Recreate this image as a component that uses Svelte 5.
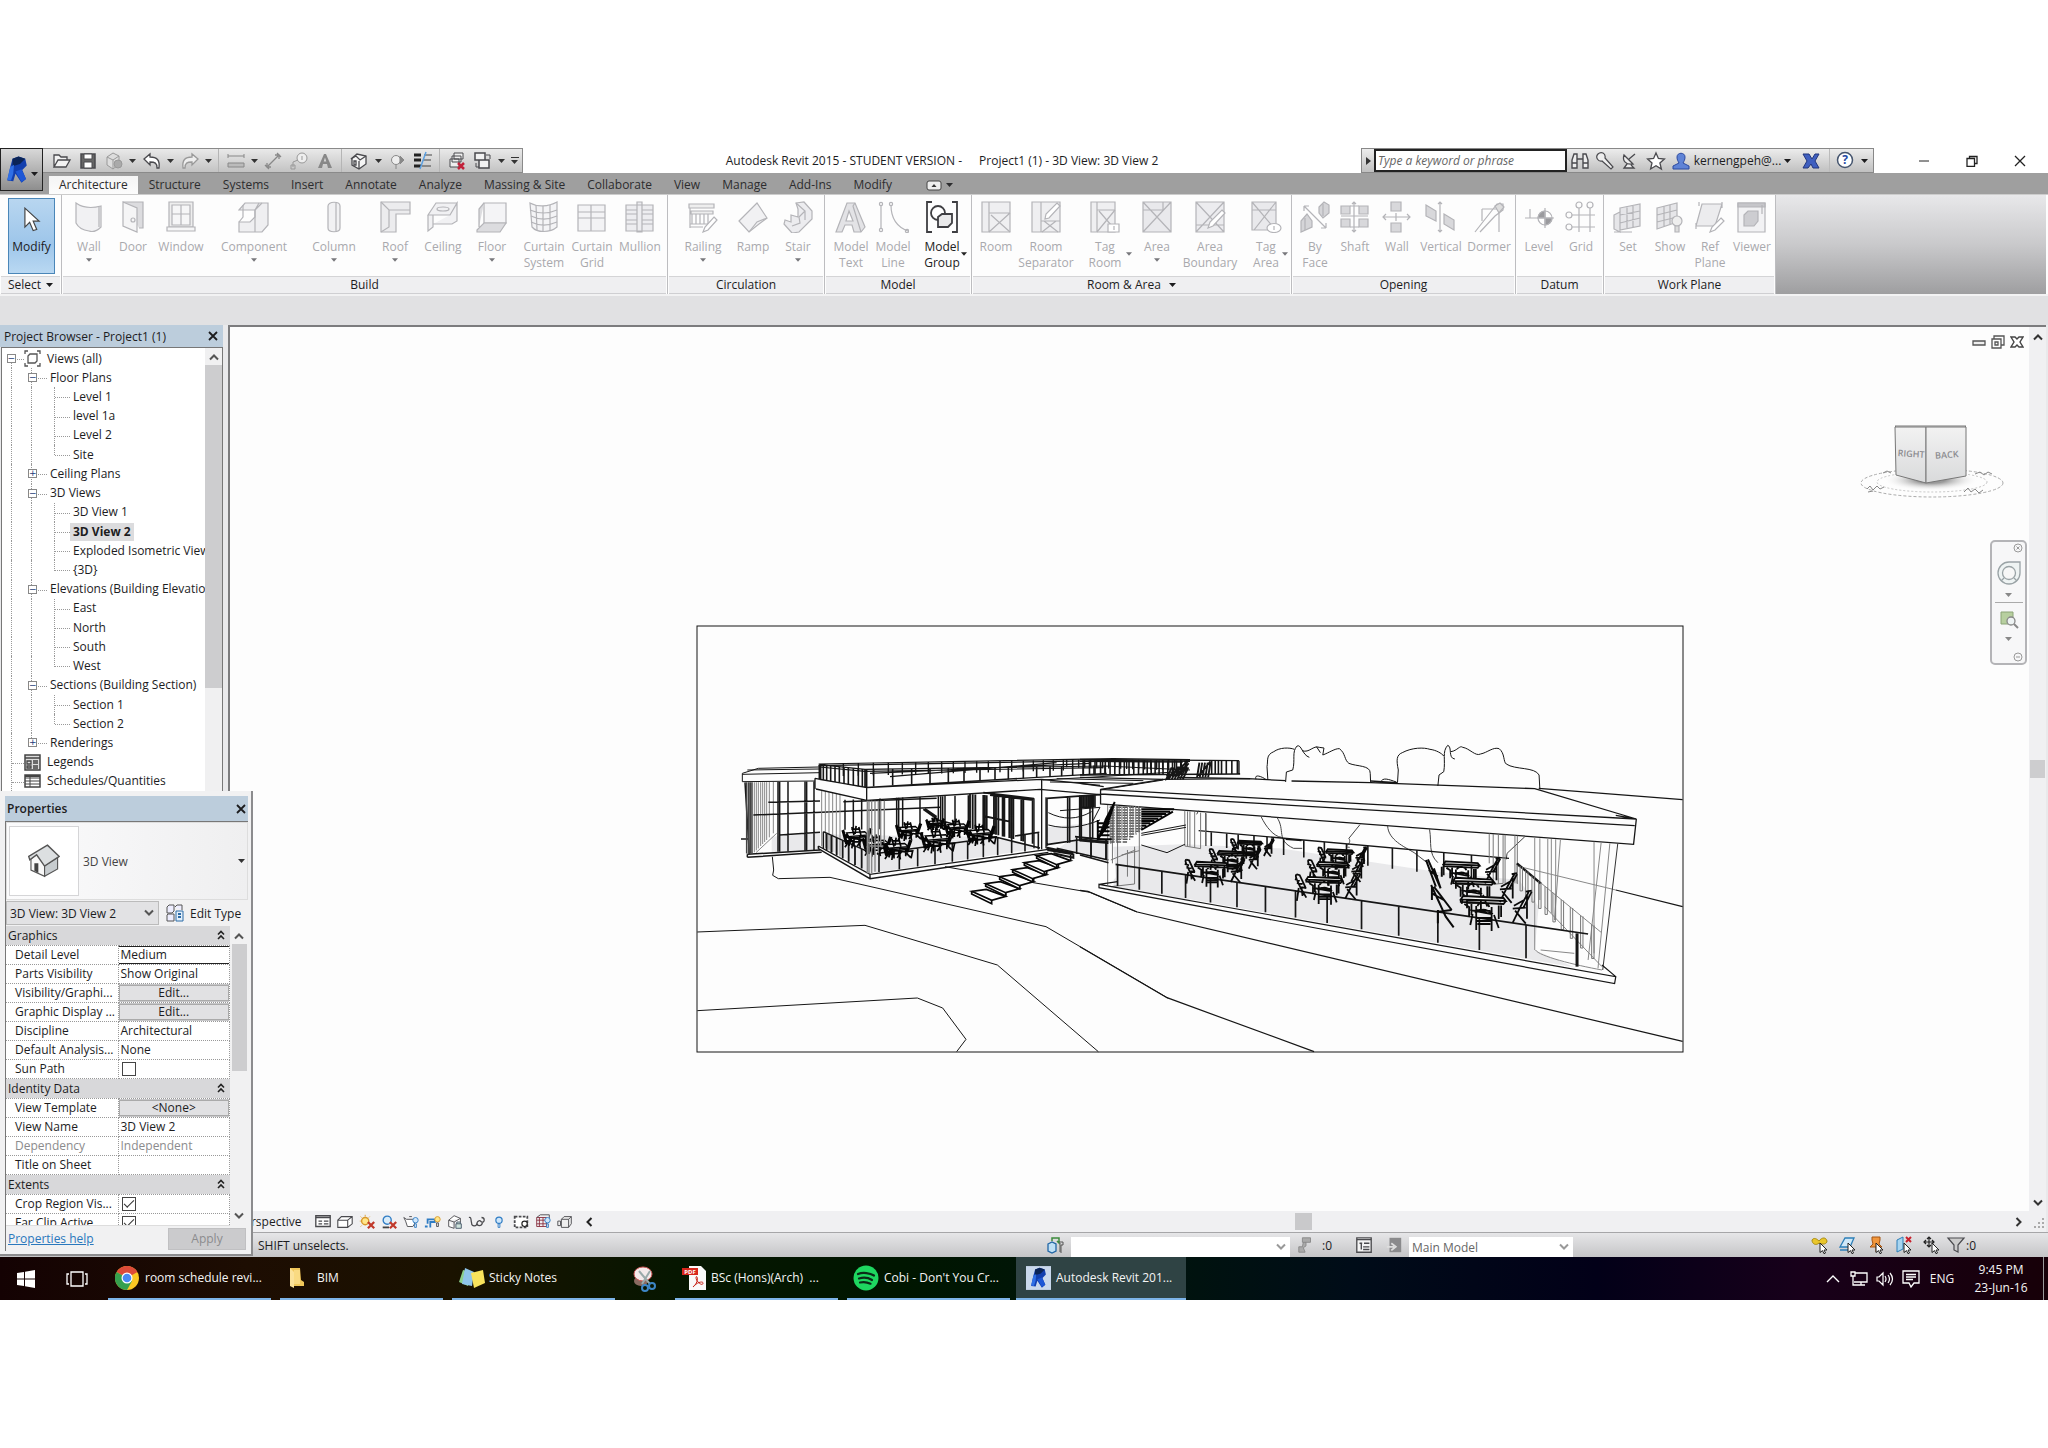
<script>
  const G = '#b4b4b8';
  const D = '#4a4a4e';

  const ribbonIcons = {
    wall: '<path d="M3 2c7 5 14 6 25 3v21c-4 4-9 5-12 4C9 29 5 26 3 22z" fill="#f1f1f3"/><path d="M26 6v20"/>',
    door: '<path d="M6 1h20v26h-4" fill="#dcdcdf"/><path d="M6 1l14 6v24L6 25z" fill="#f5f5f6"/><circle cx="16" cy="19" r="2"/>',
    window: '<path d="M4 1h24v25H4z" fill="#eee"/><path d="M7 4h18v20H7zM16 4v20M7 13h18M2 26h28v4H2z" fill="#f6f6f7"/>',
    component: '<path d="M1 9l6-7h23v22l-6 7H1V21h11l5-5V9z" fill="#efeff1"/><path d="M17 9l4-7M17 16V9l7-7M1 21l4-5V4M17 31V16"/>',
    column: '<path d="M10 5c0-5 12-5 12 0v22c0 5-12 5-12 0z" fill="#f1f1f3"/><path d="M18 2v28"/>',
    roof: '<path d="M2 1h29v12H17v18H2z" fill="#ececee"/><path d="M2 1l8 8h21M10 9v17L2 31"/>',
    ceiling: '<path d="M1 14L9 2h21l-7 12zM1 14v16l5-4V14M23 14L30 2v18l-5 3H6" fill="#f1f1f3"/><ellipse cx="16" cy="8" rx="6" ry="2"/>',
    floor: '<path d="M8 2h22v20L8 22z" fill="#f4f4f6"/><path d="M1 29l7-7h22l-6 9H1zM8 2L3 8v18" fill="#dcdcdf"/>',
    csys: '<path d="M2 2c7 4 18 4 27-1v25c-7 6-20 6-25 0z" fill="#f4f4f6"/><path d="M8 4l1 25M15 5v26M22 4v26M2 9c9 4 18 4 27 0M3 15c8 4 17 4 26 0M3 21c8 4 17 4 26 0"/>',
    cgrid: '<path d="M2 4h27v26H2zM15 4v26M2 17h27M2 11h27" fill="#f3f3f5"/>',
    mullion: '<path d="M2 4h27v26H2zM13 1h5v30h-5zM2 9h11M2 13h11M2 19h11M2 23h11M18 9h11M18 13h11M18 19h11M18 23h11" fill="#ededf0"/>',
    railing: '<path d="M2 3h25v4H2zM4 10h22v3H4zM5 13v10M9 13v10M13 13v10M17 13v10M21 13v10M3 23h19M3 26h13M3 7v20" fill="#eee"/><path d="M27 16l3 3-9 10-5 2 2-5z" fill="#fff"/>',
    ramp: '<path d="M2 20L20 2l10 15-8 6-10 8z" fill="#f1f1f3"/><path d="M12 31l8-10 10-4"/>',
    stair: '<path d="M14 2l8-1 8 9v8L17 31l-7 1-8-9 1-4 6 2V14l7 2V8z" fill="#ececef"/><path d="M14 2l9 8-6 6 1 6-8 3M23 10v9"/>',
    mtext: '<path d="M12 2h8l10 24-4 5h-7l-2-7h-7l-3 7H1z" fill="#e3e3e6"/><path d="M14 10l4 10h-7z" fill="#fff"/><path d="M20 2l-2 3 8 26"/>',
    mline: '<path d="M4 4v24M14 4c0 14 6 22 17 26"/><circle cx="4" cy="3" r="1.6"/><circle cx="4" cy="29" r="1.6"/><circle cx="14" cy="3" r="1.6"/><circle cx="30" cy="30" r="1.6"/>',
    mgroup: '<g stroke="#3e3e42" stroke-width="1.8"><path d="M6 1H1v30h5M26 1h5v30h-5"/><circle cx="12" cy="12" r="7" fill="#fff"/><path d="M12 16l4-3h10v9l-4 4H12z" fill="#e9e9ea"/></g>',
    room: '<path d="M2 1h28v30H2z" fill="#efeff1"/><path d="M9 1v30M9 12h21M9 31l21-19M11 14l19 17"/>',
    roomsep: '<path d="M2 1h28v30H2z" fill="#efeff1"/><path d="M11 1v30M11 20h19M12 31l14-11M14 20l14 11"/><path d="M27 2l3 3-11 12-4 1 1-5z" fill="#fff"/>',
    tagroom: '<path d="M2 1h24v30H2z" fill="#efeff1"/><path d="M8 1v30M8 9h18M8 31L26 9M10 10l12 14"/><path d="M19 23h11v8H19zM25 25v4" fill="#fff"/>',
    area: '<path d="M2 1h28v30H2zM2 1l28 30M30 1L2 31M2 9h20M22 1v9" fill="#e9e9ec"/>',
    bound: '<path d="M2 1h28v30H2zM2 1l28 30M30 1L2 31M2 24h28" fill="#ececef"/><path d="M28 9l3 3-12 13-5 2 2-6z" fill="#fff"/>',
    tagarea: '<path d="M2 1h24v28H2zM2 1l22 26M26 1L4 29M2 9h24" fill="#e9e9ec"/><ellipse cx="24" cy="27" rx="7" ry="4.500" fill="#fff"/><path d="M24 25v4"/>',
    byface: '<path d="M2 31V20l6-7 5 7v6zM20 12V6l5-5 5 3v8l-6 5z" fill="#d5d5d8"/><path d="M5 5l22 22M5 5v5M5 5h5M27 27v-5M27 27h-5M6 17v12M24 3v12"/>',
    shaft: '<path d="M2 5h9v8H2zM20 5h9v8h-9zM2 18h9v8H2zM20 18h9v8h-9z" fill="#d8d8db"/><path d="M15 1v30M2 15h27M11 5h9M11 26h9M13 3l2-2 2 2M13 29l2 2 2-2"/>',
    owall: '<path d="M10 1h10v9H10zM10 22h10v9H10z" fill="#d8d8db"/><path d="M2 16h27M15 12v8M5 13l-3 3 3 3M26 13l3 3-3 3"/>',
    vertical: '<path d="M1 4l10 6v10L1 15zM19 13l10 6v10l-10-6z" fill="#d8d8db"/><path d="M15 1v30M13 3l2-2 2 2M13 29l2 2 2-2"/>',
    dormer: '<path d="M2 31L24 3h6v6l-8 6L7 31M9 8h17v23M9 8v12" /><path d="M22 5l5-3 4 4-5 6z" fill="#ddd"/>',
    level: '<circle cx="22" cy="17" r="7" fill="#fff"/><path d="M22 10v7h-7a7 7 0 0 1 7-7zM22 24v-7h7a7 7 0 0 1-7 7z" fill="#9a9a9e"/><path d="M2 17h29M22 7v20M7 8v9M4 17h6"/>',
    grid: '<circle cx="14" cy="4" r="3"/><circle cx="25" cy="4" r="3"/><circle cx="4" cy="14" r="3"/><circle cx="4" cy="26" r="3"/><path d="M14 7v24M25 7v24M7 14h23M7 26h23"/>',
    set: '<path d="M8 7l20-4v22L8 29zM2 14l6-3v20l-6-3zM15 5v22M21 4v22M8 14l20-4M8 22l20-5M2 31h18" fill="#e6e6e9"/>',
    show: '<path d="M3 7l20-5v19L3 28zM10 5v21M16 4v20M3 14l20-5M3 21l20-5" fill="#e6e6e9"/><circle cx="23" cy="20" r="5" fill="#eee"/><path d="M21 25h4v6h-4z" fill="#ddd"/>',
    ref: '<path d="M8 3h20l-7 22H2zM5 1v4M28 1v6M2 22v6" fill="#ececee"/><path d="M27 17l3 3-9 9-5 2 2-5z" fill="#fff"/>',
    viewer: '<path d="M2 2h27v29H2z" fill="#f2f2f4"/><path d="M2 2h27v4H2z" fill="#c6c6ca"/><path d="M8 14l4-4h10v10l-4 5H8z" fill="#cdcdd1"/><path d="M26 4v9"/>'
  };

  const panels = [
    { name: 'Build', w: 606, pad: 5, items: [
      ['wall', ['Wall'], 44, 1], ['door', ['Door'], 44], ['window', ['Window'], 52], ['component', ['Component'], 94, 1],
      ['column', ['Column'], 66, 1], ['roof', ['Roof'], 56, 1], ['ceiling', ['Ceiling'], 40], ['floor', ['Floor'], 58, 1],
      ['csys', ['Curtain', 'System'], 46], ['cgrid', ['Curtain', 'Grid'], 50], ['mullion', ['Mullion'], 46]] },
    { name: 'Circulation', w: 157, pad: 10, items: [['railing', ['Railing'], 50, 1], ['ramp', ['Ramp'], 50], ['stair', ['Stair'], 40, 1]] },
    { name: 'Model', w: 147, pad: 5, items: [['mtext', ['Model', 'Text'], 42], ['mline', ['Model', 'Line'], 42], ['mgroup', ['Model', 'Group'], 56, 2, true]] },
    { name: 'Room & Area', w: 320, pad: 3, more: true, items: [
      ['room', ['Room'], 42], ['roomsep', ['Room', 'Separator'], 58], ['tagroom', ['Tag', 'Room'], 60, 2],
      ['area', ['Area'], 44, 1], ['bound', ['Area', 'Boundary'], 62], ['tagarea', ['Tag', 'Area'], 50, 2]] },
    { name: 'Opening', w: 224, pad: 3, items: [['byface', ['By', 'Face'], 40], ['shaft', ['Shaft'], 40], ['owall', ['Wall'], 44], ['vertical', ['Vertical'], 44], ['dormer', ['Dormer'], 52]] },
    { name: 'Datum', w: 88, pad: 2, items: [['level', ['Level'], 42], ['grid', ['Grid'], 42]] },
    { name: 'Work Plane', w: 172, pad: 3, items: [['set', ['Set'], 42], ['show', ['Show'], 42], ['ref', ['Ref', 'Plane'], 38], ['viewer', ['Viewer'], 46]] }
  ];

  const tabs = ['Architecture', 'Structure', 'Systems', 'Insert', 'Annotate', 'Analyze', 'Massing & Site', 'Collaborate', 'View', 'Manage', 'Add-Ins', 'Modify'];

  const quick = [
    ['Open', `<path d="M2 16V4h5l2 2h6v3M2 16l4-7h12l-4 7z" fill="#f2f2f2" stroke="${D}" stroke-width="1.300"/>`],
    ['Save', `<path d="M3 3h14v14H3z" fill="#666" stroke="${D}" stroke-width="1.500"/><path d="M6 3h8v5H6zM6 11h8v6H6z" fill="#fff" stroke="${D}"/>`],
    ['Synchronize', '<path d="M3 6l6-4 6 3v8l-6 5-6-4z" fill="#ddd" stroke="#999"/><path d="M3 6l6 3 6-4M9 9v9" stroke="#999"/><circle cx="14" cy="13" r="4" fill="#aaa" stroke="#999"/>'],
    'arrow',
    ['Undo', `<path d="M2 8l6-5v3c7 0 10 3 9 11l-2 0c0-5-2-6-7-6v3z" fill="#fff" stroke="${D}" stroke-width="1.300"/>`], 'arrow',
    ['Redo', '<path d="M18 8l-6-5v3C5 6 2 9 3 17l2 0c0-5 2-6 7-6v3z" fill="#eee" stroke="#999" stroke-width="1.300"/>'], 'arrow', 'sep',
    ['Dimension', '<path d="M2 5h16M2 3v4M18 3v4M2 12h16v4H2z" fill="#bbb" stroke="#888"/>'], 'arrow',
    ['Aligned dimension', '<path d="M5 15L15 5M4 12v4h4M12 4h4v4M2 14l4 4M14 2l4 4" stroke="#888" stroke-width="1.300"/>'],
    ['Tag', '<circle cx="13" cy="7" r="5" fill="#eee" stroke="#999"/><path d="M13 5v4M9 9l-5 2v5M2 14h4v4H2z" stroke="#999"/>'],
    ['Text', '<path d="M3 17L9 3h2l6 14h-4l-1-4H8l-1 4zM8.700 10.500h2.600L10 6.500z" fill="#888" fill-rule="evenodd" stroke="none"/>'], 'sep',
    ['Default 3D view', `<path d="M2 8l6-5 9 2v8l-7 5-7-4V8" fill="#f5f5f5" stroke="${D}" stroke-width="1.300"/><path d="M2 8l5-3 4 4 6-4M10 10v8M5 10v4h2v-4z" stroke="${D}" stroke-width="1.300"/>`], 'arrow',
    ['Section', '<circle cx="9" cy="9" r="4.500" fill="#eee" stroke="#888"/><path d="M13 5l4 4-4 4z" fill="#888" stroke="#888"/><path d="M9 14v4" stroke="#888"/>'],
    ['Thin lines', '<path d="M1 4h7M1 9h7M1 15h7" stroke="#222" stroke-width="3"/><path d="M11 4h8M10 9h8M9 15h9" stroke="#444"/><path d="M13 1L7 18" stroke="#5b9fe0" stroke-width="1.500"/>'], 'sep',
    ['Close hidden windows', `<path d="M7 2h9v6H7zM5 5h9v6H5zM3 8h9v8H3z" fill="#eee" stroke="${D}"/><path d="M11 12l6 6M17 12l-6 6" stroke="#c2213a" stroke-width="2.500"/>`],
    ['Switch windows', `<path d="M2 2h10v7H2zM6 9h10v8H6z" fill="#f2f2f2" stroke="${D}" stroke-width="1.500"/><path d="M13 4h4v4M3 12v4h3" stroke="${D}"/>`], 'arrow'
  ];

  const info = [
    ['Search', `<path d="M2 17V9l2-6h3v14zM18 17V9l-2-6h-3v14zM7 8h6M2 12h5M13 12h5" fill="#eee" stroke="${D}" stroke-width="1.400"/>`, 26],
    ['Subscription center', `<path d="M3 3c3-3 8-1 7 4l8 9-2 2-9-8c-4 1-7-4-4-7z" fill="#eee" stroke="${D}" stroke-width="1.200"/>`, 24],
    ['Communication center', `<path d="M4 4c-2 6 2 10 9 9zM4 4l9 9M9 8l6-5M7 13l-3 4h10l-3-3" fill="#eee" stroke="${D}" stroke-width="1.300"/>`, 26],
    ['Favorites', `<path d="M10 2l2.400 5.500 6 .5-4.500 4 1.500 6-5.400-3.300L4.600 18 6 12 1.600 8l6-.5z" fill="#fff" stroke="${D}" stroke-width="1.300"/>`, 26],
    ['Account', '<path d="M6 6c0-5 8-5 8 0 0 3-1 4-2 6l6 3v3H2v-3l6-3C7 10 6 9 6 6z" fill="#5f83d6" stroke="#2c4aa0"/>', 24]
  ];

  const tree = [
    [0, 'Views (all)', '-'], [1, 'Floor Plans', '-'], [2, 'Level 1'], [2, 'level 1a'], [2, 'Level 2'], [2, 'Site', 'end'],
    [1, 'Ceiling Plans', '+'], [1, '3D Views', '-'], [2, '3D View 1'], [2, '3D View 2', 'sel'], [2, 'Exploded Isometric View'], [2, '{3D}', 'end'],
    [1, 'Elevations (Building Elevation)', '-'], [2, 'East'], [2, 'North'], [2, 'South'], [2, 'West', 'end'],
    [1, 'Sections (Building Section)', '-'], [2, 'Section 1'], [2, 'Section 2', 'end'], [1, 'Renderings', '+'],
    [0, 'Legends', 'legend'], [0, 'Schedules/Quantities', 'sched']
  ];

  const props = [
    ['cat', 'Graphics'], ['input', 'Detail Level', 'Medium'], ['text', 'Parts Visibility', 'Show Original'], ['btn', 'Visibility/Graphi...', 'Edit...'],
    ['btn', 'Graphic Display ...', 'Edit...'], ['text', 'Discipline', 'Architectural'], ['text', 'Default Analysis...', 'None'], ['check', 'Sun Path', false],
    ['cat', 'Identity Data'], ['btn', 'View Template', '<None>'], ['text', 'View Name', '3D View 2'], ['dim', 'Dependency', 'Independent'], ['text', 'Title on Sheet', ''],
    ['cat', 'Extents'], ['check', 'Crop Region Vis...', true], ['check', 'Far Clip Active', true]
  ];

  const bulb = '<circle cx="15" cy="8" r="3" fill="#cfe6fa" stroke="#2f7cc4"/><path d="M14 12h2v4h-2z" stroke="#2f7cc4"/>';
  const redX = '<path d="M11 10l7 7M18 10l-7 7" stroke="#c0392b" stroke-width="2.500"/>';
  const viewIcons = [
    `<path d="M2 3h16v12H2z" fill="#fff" stroke="${D}" stroke-width="1.500"/><path d="M2 5h16M5 9h4M11 9h5M5 12h4M11 12h5" stroke="${D}" stroke-width="1.500"/>`,
    `<path d="M2 8h11v8H2zM2 8l4-4h12v8l-5 4M13 8l5-4" fill="#fff" stroke="${D}" stroke-width="1.200"/>`,
    `<circle cx="8" cy="9" r="4" fill="#ffe68a" stroke="#d9982a" stroke-width="1.500"/><path d="M8 2v2M2 9h1M3 4l1 1M13 4l-1 1M4 14l-1 1" stroke="#d9982a"/>${redX}`,
    `<circle cx="8" cy="8" r="4.500" fill="#d9ecfa" stroke="#2f7cc4" stroke-width="1.500"/><path d="M3 16h7" stroke="#444" stroke-width="2"/>${redX}`,
    `<path d="M2 5l3 2h8l1 5-2 3H6L4 9zM8 4h3" fill="#fff" stroke="${D}"/>${bulb}`,
    `<path d="M1 15h3M4 12V7h8v3H7v6" stroke="#2f7cc4" stroke-width="2"/><circle cx="15" cy="7" r="3" fill="#ffe68a" stroke="#d9982a"/><path d="M14 11h2v4h-2z" stroke="${D}"/>`,
    `<path d="M3 8l6-5 7 3v4M3 8v7l6 2M3 8l6 2 7-4M9 10v7" fill="#fff" stroke="${D}"/><path d="M11 12h6v5h-6zM12 12v-2h4v2" fill="#cfe3dc" stroke="#456"/>`,
    `<path d="M1 5c3-1 2 3 3 6 0 5 6 4 6 0 1-3 3-3 5-1 4 1 4-5 0-5M10 11c0 4 5 4 6 0" stroke="${D}" stroke-width="1.400"/>`,
    '<circle cx="10" cy="8" r="3.500" fill="#cfe6fa" stroke="#2f7cc4" stroke-width="1.300"/><path d="M9 12h2v4H9z" stroke="#2f7cc4"/>',
    `<path d="M3 4h14v12H3z" fill="#fff" stroke="${D}" stroke-width="2" stroke-dasharray="3 1.500"/><circle cx="14" cy="12" r="3" fill="#fff" stroke="#222" stroke-width="1.300"/>`,
    `<path d="M3 5h11v10H3zM6 5v10M10 5v10M3 8h11M3 12h11" stroke="#8a3040"/><path d="M3 5l4-3h10v8" stroke="${D}"/>${bulb}`,
    `<path d="M6 7h8v9H6zM6 7l3-3h8v8l-3 4M2 9h3v5H2zM14 7l3-3" fill="#eee" stroke="${D}"/>`
  ];

  const cur = '<path d="M10 8l7 7-3 0 1.500 3-1.500.700L12.500 15.600 10 17.500z" fill="#fff" stroke="#222"/>';
  const selectIcons = [
    `<path d="M2 5c2-3 5-1 7 1 3-4 7-4 8 0 0 3-4 4-8 2-3 3-7 1-7-3z" fill="#e9c62c" stroke="#a88a10"/>${cur}`,
    `<path d="M2 12l5-9h9l-4 9zM2 15h8" fill="#cfe8f8" stroke="#2d7fb8" stroke-width="1.300"/>${cur}`,
    `<path d="M6 2h8v3l-1 4 3 3H4l3-3-1-4zM10 12v5" fill="#f1963c" stroke="#a45413"/>${cur}`,
    `<path d="M3 5l6-3v12l-6 3z" fill="#a8d5f0" stroke="#2d7fb8"/><path d="M12 2l5 5M17 2l-5 5" stroke="#c8202c" stroke-width="2"/>${cur}`,
    `<path d="M7 2v10M2 7h10M5 4l2-2 2 2M5 10l2 2 2-2M4 5L2 7l2 2M10 5l2 2-2 2" stroke="#222" stroke-width="1.200"/>${cur}`,
    `<path d="M2 3h16l-6 7v7l-4-2v-5z" fill="#ccc" stroke="${D}" stroke-width="1.200"/>`
  ];

  const lerp = (a, b, t) => a + (b - a) * t;
  const posts = (xs, top, bot) => xs.map((x) => {
    const t = (x - top[0]) / (top[2] - top[0]);
    return `M${x} ${lerp(top[1], top[3], t)}V${lerp(bot[0], bot[1], t)}`;
  }).join('');
  const range = (a, b, step) => Array.from({ length: Math.floor((b - a) / step) + 1 }, (_, i) => a + i * step);

  const steps = [[845, 514], [887, 491], [929, 470], [968, 449], [1003, 428], [1040, 407]];
  const leftTables = [[500, 345, 0.8], [560, 370, 0.8], [655, 328, 0.7], [740, 355, 0.9], [800, 320, 0.7], [870, 338, 0.8], [620, 380, 0.8], [735, 308, 0.5]];
  const rightSets = [
    [430, 368, 0.8, 0], [385, 400, 0.95, 0], [333, 434, 1.1, 0],
    [657, 395, 0.9, 1], [640, 434, 1.05, 1], [618, 480, 1.2, 1],
    [965, 434, 1.2, 2], [995, 484, 1.35, 2], [1020, 540, 1.5, 2]
  ];
  const frontPosts = [95, 150, 207, 267, 330, 397, 469, 545, 625, 712, 806, 905, 1010, 1128];
</script>

{#snippet icon(body, size = 20)}
  <svg class="ic" width={size} height={size} viewBox="0 0 20 20" fill="none" aria-hidden="true">{@html body}</svg>
{/snippet}

{#snippet tri()}<svg class="tri" width="7" height="4" viewBox="0 0 7 4" aria-hidden="true"><path d="M0 0h7L3.500 4z" fill="currentColor" /></svg>{/snippet}

{#snippet chev(dir)}
  <svg class="chev {dir}" width="12" height="8" viewBox="0 0 12 8" fill="none" aria-hidden="true"><path d="M2 6.500l4-4 4 4" stroke="currentColor" stroke-width="2" /></svg>
{/snippet}

{#snippet cross()}<svg width="10" height="10" viewBox="0 0 10 10" aria-hidden="true"><path d="M1 1l8 8M9 1L1 9" stroke="#1c1c1e" stroke-width="1.800" /></svg>{/snippet}

{#snippet revit()}
  <path d="M10 3l8-3 9 3 2 9-6 6 5 12-6 5-8-12-3 10-8-1L7 14z" fill="#123fae" />
  <path d="M10 3l8-3 9 3-7 7-10 3z" fill="#0b2456" />
  <path d="M7 14l5-3-1 12-3 9-5-1z" fill="#2f6fe6" />
  <path d="M14 20l8-3 6 13-6 4z" fill="#1d57d6" />
{/snippet}

{#snippet house()}
  <path d="M5 26L16 18 29 38V57L5 46z" fill="#f8f8f8" stroke="#555" stroke-width="2" />
  <path d="M29 38L52 24V44L29 57z" fill="#c7cccf" stroke="#555" stroke-width="2" />
  <path d="M34 2L55 22 29 39 15 19 3 28 1 22z" fill="#dcdfe1" stroke="#555" stroke-width="2.500" />
  <path d="M11 34h7v17l-7-4z" fill="#444" />
{/snippet}

<div class="page">
  <header class="top">
    <button class="app" aria-label="Application menu">
      <svg width="24" height="32" viewBox="0 0 32 36" aria-hidden="true">{@render revit()}</svg>{@render tri()}
    </button>
    <div class="titlebar">
      <div class="quick">
        {#each quick as q}
          {#if q === 'arrow'}<button class="qa" aria-label="More">{@render tri()}</button>
          {:else if q === 'sep'}<span class="qs"></span>
          {:else}<button class="qi" aria-label={q[0]}>{@render icon(q[1])}</button>{/if}
        {/each}
        <button class="qc" aria-label="Customize toolbar"><span class="bar"></span>{@render tri()}</button>
      </div>
      <h1><span>Autodesk Revit 2015 - STUDENT VERSION -</span><span>Project1 (1) - 3D View: 3D View 2</span></h1>
      <div class="info">
        <button class="play" aria-label="Collapse search"><svg width="5" height="8" viewBox="0 0 5 8"><path d="M0 0l5 4-5 4z" fill="#333" /></svg></button>
        <input type="text" placeholder="Type a keyword or phrase" aria-label="Search help" />
        {#each info as [label, body, w]}
          <button aria-label={label} style:width="{w}px">{@render icon(body)}</button>
        {/each}
        <button class="user">kernengpeh@...{@render tri()}</button>
        <button class="xch" aria-label="Exchange apps">{@render icon('<path d="M2 3h6l3 5 3-5h4l-4 7 4 7h-6l-2-4-3 4H2l4-7z" fill="#3f5fc0" stroke="#22367c"/>')}</button>
        <button class="help" aria-label="Help"><svg width="19" height="19" viewBox="0 0 19 19"><circle cx="9" cy="9" r="7.500" fill="#fff" stroke="#44546e" stroke-width="1.500" /><text x="9" y="13" text-anchor="middle" font-size="12" font-weight="700" fill="#2549a5">?</text></svg>{@render tri()}</button>
      </div>
      <div class="win">
        <button aria-label="Minimize"><svg width="12" height="12" viewBox="0 0 12 12"><path d="M1 6h10" stroke="#222" /></svg></button>
        <button aria-label="Restore"><svg width="12" height="12" viewBox="0 0 12 12" fill="none" stroke="#222"><path d="M1 3.500h7.500v8H1zM3.500 3.500v-2H11v7H8.500" stroke-width="1.300" /></svg></button>
        <button aria-label="Close"><svg width="12" height="12" viewBox="0 0 12 12"><path d="M1 1l10 10M11 1L1 11" stroke="#222" stroke-width="1.300" /></svg></button>
      </div>
    </div>
    <nav class="tabs">
      {#each tabs as t, i}<button class:active={i === 0}>{t}</button>{/each}
      <button class="mini" aria-label="Minimize ribbon"><svg width="16" height="11" viewBox="0 0 16 11"><rect x="1" y="1" width="14" height="9" rx="2" fill="#eee" stroke="#444" /><path d="M5.500 7L8 4l2.500 3z" fill="#333" /></svg>{@render tri()}</button>
    </nav>
  </header>

  <section class="ribbon">
    <div class="panel select">
      <div class="tools"><button class="modify"><svg width="18" height="26" viewBox="0 0 14 22"><path d="M1 1v16l4-4 3 7 3-1-3-7h5z" fill="#fff" stroke="#444" /></svg>Modify</button></div>
      <div class="ptitle">Select {@render tri()}</div>
    </div>
    {#each panels as p}
      <div class="panel" style:width="{p.w}px">
        <div class="tools" style:padding-left="{p.pad}px">
          {#each p.items as [ic, lines, w, arrow, on]}
            <button class="tool" class:on class:side={arrow === 2} style:width="{w}px">
              <svg width="32" height="32" viewBox="0 0 32 32" fill="none" stroke={G} stroke-width="1.200" aria-hidden="true">{@html ribbonIcons[ic]}</svg>
              {#each lines as l}<span>{l}</span>{/each}
              {#if arrow}{@render tri()}{/if}
            </button>
          {/each}
        </div>
        <div class="ptitle">{p.name}{#if p.more}&nbsp;{@render tri()}{/if}</div>
      </div>
    {/each}
    <div class="rest"></div>
  </section>
  <div class="options"></div>

  <main class="work">
    <aside class="browser">
      <div class="phead"><span>Project Browser - Project1 (1)</span><button aria-label="Close browser">{@render cross()}</button></div>
      <div class="treewrap">
        <ul class="tree">
          {#each tree as [d, label, kind], i}
            <li>
              {#if d === 0}
                <span class="g v h" class:first={i === 0}>{#if kind === '-'}<i class="box">−</i>{/if}</span>
                <span class="ticon">
                  {#if kind === '-'}<svg width="17" height="17" viewBox="0 0 17 17" fill="none" stroke="#555"><path d="M4 1H1v3M13 1h3v3M4 16H1v-3M13 16h3v-3M4 6l2-2h7v7l-2 2H4z" stroke-width="1.300" /></svg>
                  {:else if kind === 'legend'}<svg width="17" height="17" viewBox="0 0 17 17" fill="none" stroke="#444"><path d="M1 1h15v15H1z" fill="#ddd" stroke-width="1.500" /><path d="M1 4h15M3 7h4v3H3zM3 12h4v2H3zM9 7h5M9 9h5M9 12h5M9 14h5" stroke-width="1.300" /></svg>
                  {:else}<svg width="17" height="14" viewBox="0 0 17 14" fill="none" stroke="#444"><path d="M1 1h15v12H1z" fill="#fff" stroke-width="1.500" /><path d="M1 4h15M1 7h15M1 10h15M6 1v12" /><path d="M1 2h15" stroke-width="2" /></svg>{/if}
                </span>
              {:else}
                <span class="g v"></span>
                <span class="g wide h" class:v={i < 21} class:last={i === 20} class:bare={d === 2}>{#if d === 1}<i class="box">{kind === '+' ? '+' : '−'}</i>{/if}</span>
                {#if d === 2}<span class="g wide v h" class:last={kind === 'end'}></span>{/if}
              {/if}
              <span class="lbl" class:root={d === 0} class:sel={kind === 'sel'}>{label}</span>
            </li>
          {/each}
        </ul>
        <div class="vs"><div class="arr">{@render chev('up')}</div><div class="thumb"></div></div>
      </div>
    </aside>

    <section class="view">
      <div class="canvasrow">
        <div class="canvas">
          <svg class="scene" width="988" height="428" viewBox="696 625 988 428" role="img" aria-label="3D perspective of pavilion" fill="none" stroke="#161616" stroke-width="1">
            <rect x="697" y="626" width="986" height="426" />
            <g class="ns" transform="translate(690 720) scale(0.33333)">
              <path d="M22 636L525 616 922 735 1225 995M22 872L682 834 758 864 828 958 800 995M247 410L251 450 248 466 265 476 420 472 1068 620 1435 835M765 440L925 468M1030 488L1200 517 1340 576" />
              <g stroke="none" fill="#e9e9eb">
                <path d="M245 350L390 338 390 390 245 398zM405 340L460 345 900 350 1050 385 540 460 405 380zM1072 322L1205 308V358L1072 374zM1150 352L1255 360V420L1100 390zM1270 380L1500 372V545L1280 500z" />
              </g>
              <path d="M157 160L205 145 388 141M157 160V185L375 183M157 163L390 158M172 150L390 147" />
              <path d="M153 357H175M165 187L178 403M172 403L390 390M172 412L395 397M172 403V412" stroke-width="1.500" />
              <path d={posts([170, 176, 181, 186], [165, 187, 200, 187], [400, 402])} stroke="#444" stroke-width="1.500" />
              <path d={posts([193, 199, 205, 212, 218, 224, 230, 238, 250], [190, 187, 250, 186], [400, 340]) + 'M198 398L260 340'} stroke="#888" />
              <path d={posts([264, 269, 294, 345, 350, 372], [190, 187, 390, 184], [398, 391]) + 'M190 285L750 262M235 247L390 243M460 245L740 235M270 345L390 337'} stroke-width="1.500" />
              <path d={posts(range(395, 460, 11), [388, 210, 540, 240], [375, 460])} stroke="#888" />
              <path d="M375 175L530 203 1055 178 1230 190V224L1050 208 530 241 378 207z" fill="#fdfdfd" stroke="none" />
              <path d="M375 175L530 203 1055 178 1230 196M378 207L530 241 1050 208 1230 224M375 175V207M530 203V241M388 178L530 202 1250 160M1055 178V388M1032 235V385M1068 232V385" stroke-width="1.300" />
              <path d="M1058 180L1230 170 1470 155M1080 186L1330 190M1100 176L1360 182M1230 210L1420 180" />
              <path d="M386 132L1270 116 1500 119M386 137L1270 121 1500 124M388 134L525 148 1245 138 1500 150M388 141L525 154 1240 143M540 160L1200 130M600 170L1100 128" stroke-width="1.200" />
              <path d={posts([388, 392, 400, 410, 422, 435, 448, 462, 475, 490, 505, 517, 525], [388, 134, 525, 148], [178, 202]) + posts([530, 551, 608, 665, 720, 775, 822, 870, 915, 955, 1000, 1040, 1080, 1115, 1148, 1180, 1212, 1245], [530, 148, 1245, 136], [201, 162])} stroke-width="1.600" />
              <path d={posts([460, 505, 550, 595, 637, 677, 715, 755, 790, 825, 860, 895, 930, 965, 1000, 1030, 1060, 1090, 1120], [388, 131, 1270, 118], [170, 148]) + posts(range(1130, 1490, 18), [1130, 119, 1490, 120], [142, 152])} stroke-width="1.400" />
              <path d="M385 378L540 463 1075 388M385 386L540 476 1075 397M385 378V386M540 463V476M400 335L540 398M400 335V385" stroke-width="1.400" />
              <path d={posts([410, 424, 440, 458, 476, 495, 515], [400, 336, 540, 398], [386, 458])} stroke-width="1.800" />
              <path d={posts([567, 628, 683, 735, 787, 833, 880, 923, 965, 1005, 1045], [540, 402, 1050, 338], [460, 388]) + 'M565 400L920 352M920 352L1050 384M975 348L1048 337'} stroke-width="1.600" />
              <path d={posts([465, 490, 515, 570, 620, 626, 638, 690, 745, 752, 758, 765, 795, 835], [440, 240, 1050, 218], [330, 318])} stroke-width="1.500" />
              <path d={posts([840, 848, 856, 880, 884, 890, 912, 918, 925, 938, 943, 958, 964, 970, 994, 1000, 1028], [840, 222, 1030, 236], [325, 372]) + 'M880 218L1032 236M880 288L960 305M900 225L1030 240'} stroke-width="1.900" />
              <path d={posts([1071, 1133, 1139, 1169, 1174, 1200, 1208], [1070, 235, 1210, 226], [378, 358]) + 'M1070 235L1230 224M1070 374L1205 354M1170 262H1205'} stroke-width="1.600" />
              <path d={posts(range(1170, 1215, 5), [1170, 226, 1215, 226], [262, 262])} stroke-width="1.600" />
              <path d="M1075 278C1120 300 1160 300 1205 275M1075 315C1130 330 1180 320 1230 300M1110 272L1230 262M1205 310L1230 262" />
              <path d="M700 268L745 300 790 312M705 266L740 290" stroke-width="1.800" />
              {#each leftTables as [x, y, s]}
                <g transform="translate({x} {y}) scale({s})">
                  <path d="M-38 -8L30 -12 44 0-30 6z" fill="#eee" stroke="#050505" stroke-width="1.400" />
                  <path d="M-38 -4L-30 12 44 5M-28 6V40M34 4V36M-10 6V44M12 4V40M-50 -20L-36 30M-54 -18L-40 34M-48 -4L-20 18-30 40M-46 20L-10 24M50 -26L34 22 52 40M56 -24L40 22M30 18L60 16 54 44M-18 -30L-10 0M-2 -34L-6 -4M8 -30L16 0M-20 -22H12M-14 18L-18 50M8 18L14 48M-16 26H12M-24 16L-44 46M20 16L2 42M-40 8L44 22" stroke="#050505" stroke-width="1.700" />
                </g>
              {/each}
              <path d="M532 242V460M537 242V460M545 242V460M555 242V455M565 242V400M572 242V380M583 242V370M540 378H580" stroke="#8a8a8a" stroke-width="1.400" />
              {#each steps as [x, y]}
                <path transform="translate({x} {y})" d="M0 0L60 27 102 15 44-6zM0 0V8L60 37V27M102 15V-2" fill="#fff" stroke="#080808" stroke-width="1.700" />
              {/each}
              <path d="M1072 390L1150 403V413L1090 400M1072 390V383L1150 400" stroke-width="2" />
              <path d="M1100 385L1255 420M1155 350L1255 360M1160 352V402M1203 356V412M1248 360V420" stroke-width="1.600" />
            </g>

            <g class="ns" transform="translate(1080 720) scale(0.39541 0.33333)">
              <path d="M0 511L20 514 145 576 1524 964M0 680L220 833 592 995M1160 205L1524 239M1355 510L1524 560" stroke-width="1.200" />
              <path d="M1105 438L1355 510" stroke="#888" />
              <path d="M85 480L155 380 220 398 265 373 505 385 900 455 1110 480 1160 560 1150 690 1250 742 85 497z" fill="#e9e9eb" stroke="none" />
              <path d="M475 178L473 140C476 120 470 105 490 95C505 82 530 82 542 88M520 186L522 156 538 150C545 120 535 95 549 78C560 72 562 105 580 112M562 92C580 100 590 75 605 82L617 84 614 105C630 98 645 85 656 86C672 100 668 120 680 130C700 140 735 135 734 160L735 188M445 178C440 160 460 170 470 178M598 80L608 98" />
              <path d="M803 188L805 150C800 120 800 105 815 98C840 82 870 82 885 88C900 90 915 100 920 108M905 198L908 165 920 155C925 120 915 95 930 76C942 80 930 115 948 117M938 95C955 92 960 75 968 82C985 85 1000 110 1013 102C1030 98 1045 80 1060 86C1075 100 1070 125 1078 132C1100 150 1150 140 1161 165L1163 208M760 188C765 170 780 178 800 186" />
              <path d="M0 118L402 122M0 124L260 126M0 165L405 162M0 172L210 178M250 172L430 176M402 122V165M0 190L60 200" stroke-width="1.400" />
              <path d={posts([8, 24, 38, 52, 64, 76, 88, 100, 112, 124, 136, 148, 160, 170, 180, 190, 200, 210, 222, 234, 244, 256, 266, 333, 342, 350, 358, 370, 384, 398], [0, 121, 400, 122], [164, 162])} stroke-width="1.600" />
              <path d={range(218, 262, 7).map((x) => `M${x} 178L${x + 14} 142`).join('') + range(296, 330, 7).map((x) => `M${x} 172L${x + 6} 128`).join('') + 'M215 180L275 122M240 172L275 130M300 168L330 124M218 166H250M232 154H262M244 142H270'} stroke-width="1.900" />
              <path d="M210 178L425 176 520 182M535 183L735 188 1150 206 1407 297 52 208 210 178M52 222L1403 317M52 208V252L1400 373 1407 297M1355 286L1407 297M735 183L803 188" fill="none" stroke-width="1.300" />
              <path d="M300 272L295 283M458 290C470 320 490 350 510 352M498 292C520 330 495 360 540 385H562M708 314L680 355C690 375 660 380 682 382M778 318C780 360 820 380 845 398L880 430M884 328C890 370 880 400 905 428M1125 350L1080 400 1078 418" stroke="#444" />
              <path d="M300 332L1085 415M318 280V378M520 358L560 362" stroke-width="1.300" />
              <path d={posts([332, 371, 400, 440, 473, 515, 566, 618, 674, 728, 790, 852, 920, 990], [318, 335, 1085, 415], [376, 490])} stroke-width="1.600" />
              <path d="M265 272V378L305 386M272 274V378M278 274V380M290 276V384M305 278V386M318 282V378M1035 340V430M1045 342V490M1058 343V492M1070 344V490L1035 494M1100 346V490M1106 347V492M1075 344V490" stroke="#777" />
              <path d="M1150 354V690M1152 690C1160 708 1250 735 1320 750M1183 356V570M1192 357V580M1203 358V600M1215 359L1200 600M1163 355V540M1300 365V700M1318 368L1285 720M1340 370L1310 745M1165 690L1250 700M1105 490V430L1318 637M1175 560L1320 740" stroke="#888" />
              <path d="M1360 371L1322 750" stroke="#333" />
              <path d="M1105 430L1165 490" stroke-width="2.400" />
              <path d={[1113, 1127, 1143, 1160, 1176, 1196, 1217, 1240, 1266, 1294].map((x) => `M${x} ${430 + (x - 1105) * 0.97}v${75 + (x - 1113) * 0.15}h6v-${72 + (x - 1113) * 0.15}`).join('')} stroke="#777" />
              <path d="M70 255V495M82 256V430M95 257V440M150 262V505M138 380V492L78 500M120 390V470M105 405L150 392M78 420L140 390" stroke="#777" />
              <path d={range(262, 370, 8).map((y) => `M75 ${y}H${155 - Math.max(0, y - 330)}`).join('')} stroke="#555" stroke-width="1.500" stroke-dasharray="5 1.500" />
              <path d={range(78, 152, 7).map((x) => `M${x} 258V${372 - (x - 78) * 0.5}`).join('')} stroke="#777" />
              <path d={range(0, 9, 1).map((i) => `M${46 + i * 2} ${355 - i * 6}L${70 + i * 2} ${318 - i * 8}`).join('') + range(0, 8, 1).map((i) => `M155 ${268 + i * 7}H${238 - i * 10}`).join('') + 'M155 330L235 275M45 300V358H80M45 310H75M45 322H75M45 334H75M45 346H75'} stroke="#050505" stroke-width="2" />
              <path d="M155 340L268 315M155 346L268 322M155 375L220 398 265 373" />
              <path d="M0 358L72 365M0 362L72 370M28 362V412M66 368V420M0 405L72 428" stroke-width="1.500" />
              <path d="M48 493L95 485M48 493L1355 770 1352 791 48 503zM1355 770L1320 735" stroke-width="1.200" />
              <path d={'M90 433L1285 642' + posts(frontPosts, [90, 433, 1285, 642], [497, 748])} stroke-width="1.700" />
              <path d="M1257 640V740" stroke-width="3" />
              {#each rightSets as [x, y, s, k]}
                <g transform="translate({x} {y}) scale({s})" stroke="#0a0a0a" stroke-width="1.800">
                  <path d="M-34 -8L34 -4 38 2-38 -1z" fill="#fff" />
                  <path d="M-38 -1V4L34 8 38 2M-32 8L-24 14V34M-20 8V30M26 11V38M30 11V34M-12 12V60M14 14V62M-14 26Q0 12 16 28M-12 36H14M-12 42H14M-10 48H12M-10 12C-6 2 8 4 10 14M-12 20L12 22M-22 20L14 28M18 30L26 56M-18 28L-22 50" />
                </g>
                {#if k !== 2}
                  <g transform="translate({x - 50 * s} {y}) scale({s})" stroke="#0a0a0a" stroke-width="1.800">
                    <path d="M-8 -14C-14 -12 -6 4 0 20L12 44M-8 -14L-2 -12 10 18 M0 18L12 20M-4 20L-8 52M2 20L4 40M-12 -2L-2 2M-8 8L4 10" />
                  </g>
                {/if}
                <g transform="translate({x + 56 * s * (k === 2 ? 1.1 : 1)} {y + 8}) scale({s})" stroke="#0a0a0a" stroke-width="1.800">
                  <path d="M16 -24L2 6-12 40M20 -22L6 10M-12 12L10 10M12 -14L12 32M-8 16L10 42M-10 6L8 -6M10 -22L20 -24" />
                </g>
              {/each}
              <path d="M875 420L900 500M880 418L912 505 895 445M888 495L925 590 945 622M895 500L940 570M905 570V610M890 500V540M905 575L940 570M915 440V470M882 450L905 470M890 520L920 540" stroke="#0a0a0a" stroke-width="2" />
            </g>
          </svg>

          <div class="docbtns">
            <button aria-label="Minimize view"><svg width="14" height="12" viewBox="0 0 14 12"><path d="M1 5h12v4H1z" fill="#eee" stroke="#555" stroke-width="1.300" /></svg></button>
            <button aria-label="Restore view"><svg width="14" height="14" viewBox="0 0 14 14" fill="none" stroke="#555" stroke-width="1.300"><path d="M1 4h9v9H1zM3 4V1h10v9h-3M4 7h3v3H4z" /></svg></button>
            <button aria-label="Close view"><svg width="14" height="12" viewBox="0 0 14 12"><path d="M1 1h4l2 2 2-2h4L10 6l3 5H9L7 9l-2 2H1l3-5z" fill="#fff" stroke="#444" stroke-width="1.400" /></svg></button>
          </div>

          <svg class="cube" width="148" height="84" viewBox="0 0 148 84" aria-label="View cube">
            <defs><radialGradient id="sh"><stop offset="0.300" stop-color="#999" /><stop offset="1" stop-color="#fff" stop-opacity="0" /></radialGradient>
              <linearGradient id="cf" x1="0" y1="0" x2="0" y2="1"><stop offset="0" stop-color="#f2f2f2" /><stop offset="1" stop-color="#d9dadb" /></linearGradient></defs>
            <ellipse cx="75" cy="61" rx="71" ry="14" fill="none" stroke="#aaa" stroke-dasharray="3 2" />
            <ellipse cx="75" cy="60" rx="55" ry="10" fill="none" stroke="#c4c4c4" stroke-dasharray="2 2" />
            <path d="M10 67l3-3 3 4 4-4 3 3 4-2M11 70l5-1M107 70l4-4 3 4 4-3 4 4 4-3M118 52l5-2 4 3 4-3 4 2M26 51l4-2 4 2" stroke="#888" fill="none" />
            <ellipse cx="74" cy="58" rx="48" ry="11" fill="url(#sh)" />
            <path d="M38 4h71l-2 2H40z" fill="#f5f5f5" stroke="#777" />
            <path d="M38 5h31v56l-30-8z" fill="url(#cf)" stroke="#777" /><path d="M69 5h40v49l-40 7z" fill="url(#cf)" stroke="#777" />
            <text x="54" y="35" text-anchor="middle" transform="rotate(4 54 35)">RIGHT</text>
            <text x="90" y="36" text-anchor="middle" transform="rotate(-4 90 36)">BACK</text>
          </svg>

          <div class="nav">
            <button class="corner" aria-label="Close navigation bar">{@render icon('<circle cx="10" cy="10" r="8" stroke="#999" stroke-width="2"/><path d="M7 7l6 6M13 7l-6 6" stroke="#999" stroke-width="2"/>', 10)}</button>
            <button aria-label="Steering wheel"><svg width="26" height="26" viewBox="0 0 26 26" fill="none" stroke="#9aa3a6" stroke-width="1.300"><path d="M13 2h11v11A11 11 0 1 1 13 2z" fill="#eef3f3" /><circle cx="13" cy="13" r="6.500" fill="#f7f7f7" /><path d="M8 18l-3 3M18 18l3 3" /></svg></button>
            {@render tri()}
            <hr />
            <button aria-label="Zoom region"><svg width="20" height="20" viewBox="0 0 20 20" fill="none"><path d="M2 2h12v12H2z" fill="#b7cf9f" stroke="#8ba476" /><circle cx="12" cy="11" r="4" fill="#eef3f3" stroke="#888" stroke-width="1.300" /><path d="M15 14l4 4" stroke="#888" stroke-width="2" /></svg></button>
            {@render tri()}
            <button class="corner low" aria-label="Customize navigation bar">{@render icon('<circle cx="10" cy="10" r="8" stroke="#999" stroke-width="2"/><path d="M6 10h8" stroke="#999" stroke-width="2"/>', 10)}</button>
          </div>
        </div>
        <div class="vbar">{@render chev('up')}<div class="vthumb"></div>{@render chev('down')}</div>
      </div>
      <div class="vcontrols">
        <span class="scale">Perspective</span>
        {#each viewIcons as v}<button aria-label="View control">{@render icon(v, 18)}</button>{/each}
        {@render chev('left')}
        <div class="hbar"><div class="hthumb"></div></div>
        {@render chev('right')}
        <svg class="grip" width="14" height="14" viewBox="0 0 14 14" fill="#aaa"><path d="M11 1h2v2h-2zM7 5h2v2H7zM11 5h2v2h-2zM3 9h2v2H3zM7 9h2v2H7zM11 9h2v2h-2z" /></svg>
      </div>
    </section>

    <section class="props">
      <div class="phead"><strong>Properties</strong><button aria-label="Close properties">{@render cross()}</button></div>
      <div class="pbody">
        <button class="type"><span class="thumbbox"><svg width="32" height="34" viewBox="0 0 56 60" aria-hidden="true">{@render house()}</svg></span><span>3D View</span>{@render tri()}</button>
        <div class="inst">
          <label class="sel2"><select aria-label="Instance"><option>3D View: 3D View 2</option></select>{@render chev('down')}</label>
          <button class="edit"><svg width="18" height="18" viewBox="0 0 18 18" fill="none" stroke="#555"><path d="M1 3l2-2h5v6L6 9H1zM9 3l2-2h5v5M1 11l1-1h6v7H1z" fill="#eef" /><path d="M10 7h7v10h-7z" fill="#e3effa" stroke="#2d6ca8" /><path d="M12 10h3M12 13h3" stroke="#2d6ca8" stroke-width="2" /></svg>Edit Type</button>
        </div>
        <div class="gridwrap">
          <div class="clip">
            <table>
              <colgroup><col class="c1" /><col /></colgroup>
              <tbody>
                {#each props as [kind, name, val]}
                  {#if kind === 'cat'}
                    <tr class="cat"><th colspan="2">{name}<svg width="8" height="10" viewBox="0 0 8 10" fill="none" stroke="#222" stroke-width="1.600"><path d="M1 4.500L4 1.500l3 3M1 9l3-3 3 3" /></svg></th></tr>
                  {:else}
                    <tr class:dim={kind === 'dim'}>
                      <td>{name}</td>
                      <td class={kind}>
                        {#if kind === 'btn'}<button>{val}</button>
                        {:else if kind === 'check'}<input type="checkbox" checked={val} aria-label={name} />
                        {:else if kind === 'input'}<input type="text" value={val} aria-label={name} />
                        {:else}{val}{/if}
                      </td>
                    </tr>
                  {/if}
                {/each}
              </tbody>
            </table>
          </div>
          <div class="pvs">{@render chev('up')}<div class="pthumb"></div>{@render chev('down')}</div>
        </div>
        <div class="foot"><a href="#help">Properties help</a><button disabled>Apply</button></div>
      </div>
    </section>
  </main>

  <footer class="status">
    <span class="msg">SHIFT unselects.</span>
    <button class="ws" aria-label="Worksets">{@render icon('<path d="M2 9l4-2 4 2v7l-4 2-4-2z" fill="#bfe0f5" stroke="#2166a5" stroke-width="1.300"/><path d="M6 6V3h7v5l-2-2" stroke="#3c8a3c" stroke-width="1.500"/><path d="M14 8v9M13 7h4v3h-2v8" stroke="#555"/>')}</button>
    <label class="ssel wide2"><select aria-label="Active workset"><option></option></select>{@render chev('down')}</label>
    <button class="s1" aria-label="Editing requests">{@render icon('<path d="M6 2h9v5H6zM7 7L6 12H2v6h7l-2-5 3-2V7" fill="#aaa" stroke="#888"/>', 18)}</button><span class="n0">:0</span>
    <button class="s2" aria-label="Design options">{@render icon(`<path d="M2 2h16v16H2z" fill="#f4f4f4" stroke="${D}" stroke-width="1.500"/><path d="M2 4h16M5 8h3M10 8h6M7 8v7M9 12h7M9 15h7" stroke="${D}" stroke-width="1.500"/>`, 18)}</button>
    <button class="s3" aria-label="Add to set">{@render icon('<path d="M5 2h13v16H5z" fill="#8a8a8c"/><path d="M2 12h8M7 8l5 4-5 4" stroke="#ddd" stroke-width="2"/>', 18)}</button>
    <label class="ssel"><select aria-label="Design option"><option>Main Model</option></select>{@render chev('down')}</label>
    <span class="spring"></span>
    {#each selectIcons as s}<button class="si" aria-label="Selection option">{@render icon(s)}</button>{/each}
    <span class="n1">:0</span>
  </footer>

  <nav class="task">
    <button class="start" aria-label="Start"><svg width="18" height="18" viewBox="0 0 18 18" fill="#fff"><path d="M0 3l7-1v6.500H0zM8 1.800L18 0v8.500H8zM0 9.500h7V16l-7-1zM8 9.500h10V18L8 16.200z" /></svg></button>
    <button class="start" aria-label="Task view"><svg width="22" height="16" viewBox="0 0 22 16" fill="none" stroke="#fff" stroke-width="1.300"><path d="M5 1h12v14H5zM3 3H1v10h2M19 3h2v10h-2" /></svg></button>
    <button class="tb chrome"><svg width="24" height="24" viewBox="0 0 24 24"><circle cx="12" cy="12" r="12" fill="#fbc723" /><path d="M12 12L1.600 6A12 12 0 0 1 22.400 6z" fill="#dd4b39" /><path d="M12 12L1.600 6A12 12 0 0 0 12 24l5-9z" fill="#35a04e" /><circle cx="12" cy="12" r="5.500" fill="#fff" /><circle cx="12" cy="12" r="4.300" fill="#4a8af4" /></svg>room schedule revi...</button>
    <button class="tb folder"><svg width="16" height="22" viewBox="0 0 16 22"><path d="M1 1h10l1 12 3 2v4H1z" fill="#f0c75a" /><path d="M1 1l4 4v16l-4-2z" fill="#fbe29a" /><path d="M5 3h6v14H5z" fill="#f9da82" /></svg>BIM</button>
    <button class="tb sticky"><svg width="26" height="22" viewBox="0 0 26 22"><path d="M4 3l8 2-3 14-9-4z" fill="#8ccf8a" /><path d="M6 1l9 4-2 14-10-2z" fill="#8fc4ea" /><path d="M12 6l12-3 2 13-11 5z" fill="#f8e35c" /></svg>Sticky Notes</button>
    <button class="snip" aria-label="Snipping Tool"><svg width="24" height="26" viewBox="0 0 24 26" fill="none"><ellipse cx="8" cy="15" rx="7" ry="5" fill="#8a6a60" /><ellipse cx="10" cy="8" rx="9" ry="7" fill="#f3eaea" stroke="#c55" /><path d="M6 5l11 13M17 5L9 18" stroke="#9aa" stroke-width="2" /><circle cx="19" cy="20" r="3" stroke="#3d86c6" stroke-width="2" /><circle cx="12" cy="22" r="3" stroke="#3d86c6" stroke-width="2" /></svg></button>
    <button class="tb pdf"><svg width="24" height="26" viewBox="0 0 24 26" fill="none"><path d="M7 1h12l5 5v19H7z" fill="#fafafa" /><path d="M0 3h16v7H0z" fill="#d8271c" /><text x="8" y="9" text-anchor="middle" font-size="6" font-weight="700" fill="#fff">PDF</text><path d="M11 22c4-3 5-8 4-10s-2 2 1 5 5 3 5 1-6-1-10 4z" stroke="#c8281e" /></svg>BSc (Hons)(Arch)&nbsp; ...</button>
    <button class="tb spot"><svg width="26" height="26" viewBox="0 0 26 26" fill="none"><circle cx="13" cy="13" r="12.500" fill="#1ed760" /><path d="M5 9c5-2 12-1 16 1.500M6 13.500c5-1.500 9-1 13 1.500M7 17.500c4-1 7-.5 10.500 1.200" stroke="#0c2b18" stroke-width="2.200" stroke-linecap="round" /></svg>Cobi - Don't You Cr...</button>
    <button class="tb rvt"><svg width="25" height="26" viewBox="-6 -3 44 42"><path d="M-6 -3h44v42H-6z" fill="#c9d8ec" />{@render revit()}</svg>Autodesk Revit 201...</button>
    <span class="spring"></span>
    <button class="tray" aria-label="Hidden icons"><svg width="14" height="9" viewBox="0 0 14 9" fill="none" stroke="#fff" stroke-width="1.400"><path d="M1 8l6-6 6 6" /></svg></button>
    <button class="tray" aria-label="Network"><svg width="18" height="16" viewBox="0 0 18 16" fill="none" stroke="#fff" stroke-width="1.300"><path d="M5 2h12v9H4M1 1h4v4H1zM3 5v9h5M8 14h7M11 11v3" /></svg></button>
    <button class="tray" aria-label="Volume"><svg width="18" height="16" viewBox="0 0 18 16" fill="none" stroke="#fff" stroke-width="1.200"><path d="M1 6h2l4-4v12l-4-4H1zM9 5q2 3 0 6M12 4q3 4 0 8M14 2q5 6 0 12" /></svg></button>
    <button class="tray" aria-label="Notifications"><svg width="18" height="18" viewBox="0 0 18 18" fill="none" stroke="#fff" stroke-width="1.300"><path d="M1 1h16v12h-5l-3 4-2-4H1zM4 4.500h10M4 7h10M4 9.500h7" /></svg></button>
    <button class="lang">ENG</button>
    <button class="clock"><span>9:45 PM</span><span>23-Jun-16</span></button>
    <span class="desk"></span>
  </nav>
</div>

<style>
  :global(body) { background: #fff; font-family: "Open Sans", "Noto Sans", sans-serif; font-size: 12px; color: #1c1c1e; }
  :global(*) { box-sizing: border-box; }
  button, input, select { font: inherit; color: inherit; border: 0; background: none; padding: 0; margin: 0; border-radius: 0; }
  button { display: flex; align-items: center; justify-content: center; white-space: nowrap; }
  svg { display: block; flex: none; }
  .page { height: 100vh; padding: 148px 0; display: flex; flex-direction: column; overflow: hidden; }

  .top { display: grid; grid-template-columns: 43px 1fr; grid-template-rows: 25px 21px; background: linear-gradient(#fff 25px, #9f9f9f 25px); }
  .app { grid-row: 1 / 3; height: 43px; border: 1px solid #222; background: linear-gradient(#d8d8d8, #8e8e8e); gap: 2px; }
  .app .tri { margin-top: 8px; }
  .titlebar { display: flex; align-items: stretch; background: #fff; min-width: 0; }
  .quick { display: flex; width: 480px; padding-left: 6px; border: 1px solid #8a8a8a; border-left: 0; background: linear-gradient(#e9e9e9, #c3c3c3); color: #333; }
  .qi { width: 26px; } .qa { width: 12px; } .qs { width: 1px; margin: 0 4px 0 3px; background: #b5b5b5; }
  .qc { flex-direction: column; gap: 2px; width: 14px; } .bar { width: 8px; height: 1px; background: #333; }
  h1 { flex: 1; display: flex; justify-content: center; align-items: center; gap: 17px; margin: 0; font-size: 12px; font-weight: 400; white-space: nowrap; }
  .info { display: flex; width: 513px; border: 1px solid #888; background: linear-gradient(#ececec, #c0c0c0); }
  .play { width: 12px; }
  .info input { width: 193px; border: 2px solid #222; background: #fff; padding: 0 2px; font-style: italic; }
  .info input::placeholder { color: #666; opacity: 1; }
  .user { flex: 1; gap: 3px; font-weight: 500; }
  .xch { width: 38px; border-right: 1px solid #bbb; } .help { width: 43px; gap: 6px; }
  .win { display: flex; width: 174px; padding-left: 26px; }
  .win button { width: 48px; }
  .tabs { display: flex; align-items: flex-end; padding-left: 6px; color: #2c2c2e; }
  .tabs button { height: 18px; padding: 0 11px; line-height: 18px; }
  .tabs .active { background: linear-gradient(#f4f4f4, #fcfcfc); padding: 0 10px; }
  .tabs .mini { gap: 4px; margin-left: 12px; }

  .ribbon { display: flex; height: 100px; border-top: 1px solid #ccc; background: #fdfdfd; }
  .panel { display: flex; flex-direction: column; border-right: 1px solid #bdbdc0; flex: none; }
  .select { width: 62px; }
  .tools { flex: 1; display: flex; align-items: stretch; }
  .ptitle { height: 18px; margin: 0 1px; display: flex; align-items: center; justify-content: center; gap: 5px; background: #efeff1; border-top: 1px solid #d4d4d6; border-bottom: 1px solid #cfcfd2; line-height: 16px; }
  .modify { flex: 1; flex-direction: column; margin: 3px 6px 2px 8px; border: 1px solid #4a86b8; background: linear-gradient(#b8d6f0, #9ec6ea 60%, #b9d8f2); justify-content: flex-start; padding-top: 8px; gap: 5px; }
  .tool { flex: none; flex-direction: column; justify-content: flex-start; padding-top: 6px; color: #a9a9ad; line-height: 16px; position: relative; }
  .tool svg:first-child { margin-bottom: 6px; }
  .tool .tri { margin-top: 3px; color: #77777b; width: 6px; }
  .tool.on { color: #222; }
  .side .tri { position: absolute; right: 3px; top: 57px; margin: 0; }
  .tool.on .tri { color: #222; }
  .rest { flex: 1; background: linear-gradient(#e8e8ea, #c9c9cb 50%, #9e9ea0); margin: 0 2px 0 0; }
  .options { height: 31px; background: #e1e1e3; border-top: 2px solid #f2f2f3; }

  .work { flex: 1; min-height: 0; display: flex; position: relative; background: #e9e9eb; }
  .browser { width: 228px; display: flex; flex-direction: column; padding-right: 5px; min-height: 0; }
  .phead { height: 22px; display: flex; align-items: center; justify-content: space-between; padding: 0 5px 0 4px; background: #bccddc; }
  .treewrap { flex: 1; min-height: 0; display: flex; border: 1px solid #777; border-bottom: 0; margin-left: 1px; background: #fff; }
  .tree { list-style: none; margin: 0; padding: 1px 0 0; flex: 1; min-width: 0; height: 443px; display: grid; grid-auto-rows: 1fr; overflow: hidden; }
  .tree li { display: flex; align-items: center; min-width: 0; white-space: nowrap; overflow: hidden; }
  .g { position: relative; width: 20px; align-self: stretch; flex: none; display: grid; place-items: center; }
  .g.wide { width: 23px; }
  .g.v::before { content: ""; position: absolute; left: 9px; top: 0; bottom: 0; border-left: 1px dotted #999; }
  .g.first::before { top: 10px; } .g.last::before { bottom: 9px; }
  .g.h::after { content: ""; position: absolute; left: 10px; right: -2px; top: 10px; border-top: 1px dotted #999; }
  .g.bare::after { display: none; }
  .box { position: relative; z-index: 1; width: 9px; height: 9px; margin-right: 2px; border: 1px solid #888; background: #fff; font: 9px/7px "DejaVu Sans", sans-serif; text-align: center; color: #223a7a; }
  .ticon { width: 20px; margin-left: 2px; }
  .lbl { padding: 0 3px; margin-left: 2px; line-height: 18px; }
  .root { margin-left: 0; }
  .sel { background: #dcdcde; font-weight: 700; }
  .vs { width: 17px; background: #f0f0f1; }
  .arr { height: 17px; display: grid; place-items: center; }
  .thumb { height: 323px; background: #cdcdcf; }
  .chev { color: #555; } .down { rotate: 180deg; } .left { rotate: -90deg; } .right { rotate: 90deg; }

  .view { flex: 1; min-width: 0; display: flex; flex-direction: column; border: 2px solid #7c7c7e; border-bottom: 0; border-right: 0; margin-right: 2px; background: #fdfdfd; }
  .canvasrow { flex: 1; min-height: 0; display: flex; }
  .canvas { flex: 1; position: relative; overflow: hidden; }
  .scene { position: absolute; left: 466px; top: 298px; }
  .ns :global(path) { vector-effect: non-scaling-stroke; }
  .docbtns { position: absolute; right: 5px; top: 8px; display: flex; gap: 5px; }
  .cube { position: absolute; left: 1627px; top: 95px; }
  .cube text { font-size: 9px; font-weight: 600; fill: #8c8c90; }
  .nav { position: absolute; right: 2px; top: 213px; width: 37px; height: 125px; border: 2px solid #b4b4b7; border-radius: 5px; background: #f7f7f8; display: flex; flex-direction: column; align-items: center; color: #888; }
  .corner { align-self: flex-end; margin: 1px 2px 7px 0; } .low { margin: auto 2px 1px 0; }
  .nav .tri { margin-top: 7px; }
  .nav hr { width: 28px; margin: 5px 0 7px; border: 0; border-top: 1px solid #aaa; }
  .vbar { width: 17px; background: #f0f0f2; display: flex; flex-direction: column; align-items: center; padding: 6px 0 4px; }
  .vbar .chev { color: #333; }
  .vthumb { width: 15px; height: 18px; background: #cdcdcf; margin: 419px 0 auto; }
  .vcontrols { height: 21px; display: flex; align-items: center; background: #f0f0f2; padding-left: 7px; }
  .vcontrols button { width: 22px; }
  .scale { width: 75px; }
  .vcontrols .left { margin-left: 7px; color: #222; }
  .hbar { flex: 1; padding-left: 700px; } .hthumb { width: 17px; height: 17px; background: #c9c9cb; }
  .vcontrols .right { color: #333; }
  .grip { margin: 4px 1px 0 6px; }

  .props { position: absolute; left: 0; bottom: -24px; width: 253px; height: 465px; z-index: 2; padding: 5px 3px 3px 5px; background: #f1f1f2; border: solid #8c8c8e; border-width: 0 2px 2px 0; display: flex; flex-direction: column; }
  .props .phead { height: 25px; padding: 0 2px; }
  .props .phead strong { font-weight: 600; }
  .pbody { flex: 1; min-height: 0; display: flex; flex-direction: column; border-top: 1px solid #777; border-left: 1px solid #777; }
  .type { height: 78px; background: linear-gradient(90deg, #fbfbfc, #efeff0); justify-content: flex-start; border: 1px solid #ddd; padding: 0 2px; color: #444; gap: 4px; }
  .type .tri { margin-left: auto; color: #333; }
  .thumbbox { width: 70px; height: 70px; border: 1px solid #d5d5d7; background: #fff; display: grid; place-items: center; }
  .inst { display: flex; height: 26px; align-items: center; }
  .sel2 { position: relative; width: 153px; height: 24px; display: flex; align-items: center; border: 1px solid #bbb; background: #e2e2e4; }
  .sel2 select, .ssel select { appearance: none; width: 100%; height: 100%; padding-left: 3px; }
  .sel2 .chev { position: absolute; right: 3px; }
  .edit { gap: 6px; margin-left: 7px; }
  .gridwrap { flex: 1; min-height: 0; display: flex; }
  .clip { flex: 1; overflow: hidden; border-bottom: 1px solid #ddd; }
  table { width: 100%; height: 307px; border-collapse: collapse; table-layout: fixed; background: #fff; }
  .c1 { width: 112px; }
  td, th { padding: 0; line-height: 16px; white-space: nowrap; overflow: hidden; font-weight: 400; text-align: left; }
  td { border: 1px dotted #999; padding-left: 2px; }
  td:first-child { padding-left: 9px; border-left: 0; }
  .cat { background: #d8d8da; }
  .cat th { padding-left: 2px; line-height: 17px; } .cat svg { float: right; margin: 3px 5px 0 0; }
  .dim { color: #8b8b8d; }
  td.btn, td.input { padding: 0; }
  td button { width: 100%; height: 16px; border: 1px solid #aaa; background: #e1e1e3; line-height: 14px; outline: 1px solid #c6c6c8; }
  td input[type="text"] { width: 100%; height: 16px; outline: 1px solid #222; outline-offset: 0; padding: 0 2px; display: block; }
  td input[type="checkbox"] { appearance: none; width: 14px; height: 14px; border: 1px solid #444; background: #fff; display: block; margin: 1px 0 0 1px; }
  td input[type="checkbox"]:checked::after { content: ""; display: block; width: 9px; height: 4px; margin: 2px 0 0 1px; border: solid #333; border-width: 0 0 1px 1px; rotate: -45deg; }
  .pvs { width: 18px; display: flex; flex-direction: column; align-items: center; padding: 6px 0; }
  .pthumb { width: 15px; height: 127px; margin: 4px 0 auto; background: #cdcdcf; }
  .foot { height: 25px; display: flex; align-items: center; justify-content: space-between; padding: 0 2px; }
  .foot a { color: #2a78bd; }
  .foot button { width: 78px; height: 22px; background: #cbcbcd; color: #8b8b8d; border: 1px solid #c0c0c2; }

  .status { height: 25px; display: flex; align-items: center; background: linear-gradient(#e6e6e8, #c5c5c7); border-top: 1px solid #a6a6a8; }
  .msg { flex: 0 0 1040px; padding-left: 258px; }
  .ws { width: 31px; }
  .ssel { position: relative; width: 164px; height: 20px; background: #fff; display: flex; align-items: center; color: #666; align-self: flex-end; }
  .wide2 { width: 219px; }
  .ssel .chev { position: absolute; right: 3px; color: #999; }
  .s1 { width: 32px; } .n0 { width: 27px; } .s2 { width: 30px; } .s3 { width: 30px; }
  .spring { flex: 1; }
  .si { width: 28px; } .si:nth-last-child(2) { width: 20px; } .n1 { width: 82px; }

  .task { height: 43px; display: flex; align-items: stretch; color: #f4f4f4; background: linear-gradient(90deg, #140203, #1d0d02 12%, #1a1200 22%, #061600 33%, #001600 44%, #00140c 56%, #000c18 66%, #020018 78%, #18001a 88%, #170008); }
  .start { width: 51px; }
  .tb { width: 163px; margin-right: 9px; border-bottom: 2px solid #7db4e8; justify-content: flex-start; gap: 6px; padding-left: 7px; }
  .chrome { margin-left: 6px; }
  .folder { padding-left: 9px; gap: 12px; }
  .sticky { margin-right: 0; gap: 4px; }
  .snip { width: 60px; }
  .pdf { gap: 5px; }
  .spot { margin-right: 6px; padding-left: 6px; gap: 5px; }
  .rvt { width: 170px; margin: 0; padding-left: 10px; gap: 5px; background: #2f4344; }
  .tray { width: 26px; }
  .lang { width: 36px; }
  .clock { flex-direction: column; width: 82px; line-height: 18px; }
  .desk { border-left: 1px solid #999; width: 5px; margin-left: 1px; }
</style>
